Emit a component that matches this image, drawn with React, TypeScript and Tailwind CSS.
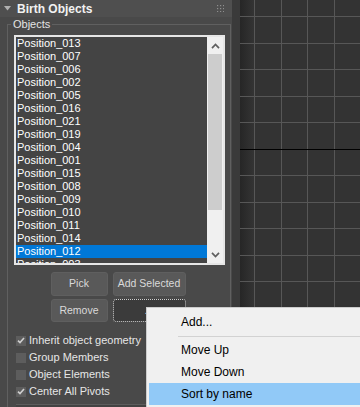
import React from 'react';

const positions = [
  'Position_013', 'Position_007', 'Position_006', 'Position_002', 'Position_005',
  'Position_016', 'Position_021', 'Position_019', 'Position_004', 'Position_001',
  'Position_015', 'Position_008', 'Position_009', 'Position_010', 'Position_011',
  'Position_014', 'Position_012', 'Position_003',
];

const options = [
  { label: 'Inherit object geometry', checked: true },
  { label: 'Group Members', checked: false },
  { label: 'Object Elements', checked: false },
  { label: 'Center All Pivots', checked: true },
];

const Chevron = ({ up }: { up?: boolean }) => (
  <svg width="9" height="6" viewBox="0 0 9 6">
    <path d={up ? 'M1 5.2 4.5 1.5 8 5.2' : 'M1 0.8 4.5 4.5 8 0.8'} fill="none" stroke="#5f5f5f" strokeWidth="1.7" />
  </svg>
);

const Grip = () => (
  <svg width="7" height="7" viewBox="0 0 7 7">
    {[0, 3, 6].map((y) =>
      [0, 3, 6].map((x) => <rect key={`${x}-${y}`} x={x} y={y} width="1.2" height="1.2" fill="#8e8e8e" />)
    )}
  </svg>
);

const Viewport = () => {
  const cols = [0, 1, 2, 3, 4].map((k) => Math.round(14 + 26.5 * k) + 0.5);
  const rows = Array.from({ length: 15 }, (_, k) => Math.round(16 + 26.5 * k) + 0.5);
  return (
    <svg width="120" height="407" viewBox="0 0 120 407" className="block shrink-0">
      <defs>
        <linearGradient id="shade" x1="0" x2="1" y1="0" y2="0">
          <stop offset="0" stopColor="#262626" />
          <stop offset="1" stopColor="#333333" />
        </linearGradient>
      </defs>
      <rect width="120" height="407" fill="#333333" />
      <rect width="13" height="407" fill="url(#shade)" />
      {cols.map((x) => (
        <line key={x} x1={x} x2={x} y1="0" y2="407" stroke="#575757" strokeWidth="1" />
      ))}
      {rows.map((y, i) => (
        <line key={y} x1="0" x2="120" y1={y} y2={y} stroke={i === 5 ? '#000000' : '#575757'} strokeWidth="1" />
      ))}
    </svg>
  );
};

export default function App() {
  return (
    <div className="relative flex h-[407px] w-[360px] overflow-hidden bg-[#4a4a4a] font-['Liberation_Sans',Arial,sans-serif]">
      <div className="flex w-[232px] shrink-0 flex-col bg-[#494949]">
        <div className="flex h-[17px] shrink-0 items-center bg-[#4f4f4f] pl-[4px] pr-[8px]">
          <svg width="7" height="5" viewBox="0 0 7 5" className="mr-[6px]">
            <path d="M0 0H7L3.5 4.5Z" fill="#b0b0b0" />
          </svg>
          <span className="text-[12px] font-bold leading-none text-[#f2f2f2]">Birth Objects</span>
          <div className="ml-auto">
            <Grip />
          </div>
        </div>

        <fieldset className="ml-[7px] mr-[1px] mt-px shrink-0 border border-b-0 border-[#606060] pb-2">
          <legend className="ml-[3px] px-[2px] text-[11px] leading-[12px] text-[#e4e4e4]">Objects</legend>

          <div className="ml-[6px] mt-[5px] flex h-[230px] w-[211px] border-2 border-[#e6e6e6] bg-[#444444]">
            <div className="w-[191px] overflow-hidden">
              {positions.map((p) => (
                <div
                  key={p}
                  className={`h-[13px] pl-[1px] text-[11px] leading-[13px] text-white ${
                    p === 'Position_012' ? 'bg-[#0078d7]' : ''
                  }`}
                >
                  {p}
                </div>
              ))}
            </div>
            <div className="flex w-[16px] flex-col bg-[#f0f0f0]">
              <div className="flex h-[17px] items-center justify-center">
                <Chevron up />
              </div>
              <div className="mx-px h-[156px] bg-[#cdcdcd]" />
              <div className="flex-1" />
              <div className="flex h-[17px] items-center justify-center">
                <Chevron />
              </div>
            </div>
          </div>

          <div className="mt-[7px] grid grid-cols-[57px_73px] justify-center gap-x-[5px] gap-y-[3px] pr-[2px]">
            <button className="h-[24px] rounded-[3px] border border-[#5f5f5f] bg-[#595959] text-[10.5px] text-[#dadada]">Pick</button>
            <button className="h-[24px] rounded-[3px] border border-[#5f5f5f] bg-[#595959] text-[10.5px] text-[#dadada]">Add Selected</button>
            <button className="h-[23px] rounded-[3px] border border-[#5f5f5f] bg-[#595959] text-[10.5px] text-[#dadada]">Remove</button>
            <button className="h-[23px] rounded-[3px] border border-dotted border-[#d0d0d0] bg-[#3b3b3b] text-[11px] leading-none text-[#dadada]">...</button>
          </div>

          <div className="mt-[10px] pl-[8px]">
            {options.map((o) => (
              <div key={o.label} className="flex h-[17px] items-center">
                <div className="flex h-[10px] w-[10px] items-center justify-center bg-[#5d5d5d]">
                  {o.checked && (
                    <svg width="8" height="7" viewBox="0 0 8 7">
                      <path d="M1 3.6 3 5.6 7 1" fill="none" stroke="#cfcfcf" strokeWidth="1.6" />
                    </svg>
                  )}
                </div>
                <span className="ml-[3px] text-[11px] text-[#e6e6e6]">{o.label}</span>
              </div>
            ))}
          </div>
          <div className="ml-[8px] mt-[4px] h-[6px] border-t border-[#5c5c5c] bg-[#424242]" />
        </fieldset>
      </div>

      <div className="w-[8px] shrink-0 bg-[#3a3a3a]" />
      <Viewport />

      <div className="absolute left-[146px] top-[307px] w-[220px] border border-[#cccccc] bg-[#f0f0f0] p-[2px] text-[12px] text-black shadow-[2px_2px_3px_rgba(0,0,0,0.35)]">
        <div className="flex h-[23px] items-center pl-[32px]">Add...</div>
        <div className="flex h-[6px] items-center pl-[29px]">
          <div className="h-px w-full bg-[#d2d2d2]" />
        </div>
        <div className="flex h-[22px] items-center pl-[32px]">Move Up</div>
        <div className="flex h-[22px] items-center pl-[32px]">Move Down</div>
        <div className="flex h-[22px] items-center bg-[#91c9f7] pl-[32px]">Sort by name</div>
      </div>
    </div>
  );
}
